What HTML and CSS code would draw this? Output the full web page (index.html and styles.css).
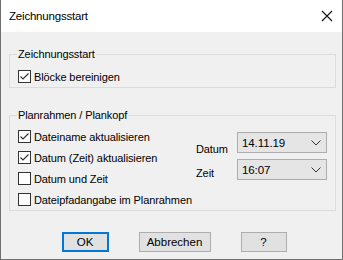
FILE: index.html
```html
<!DOCTYPE html>
<html>
<head>
    <title>Zeichnungsstart</title>
    <link rel="stylesheet" href="styles.css">
</head>
<body>
    <div class="window">
        <div class="titlebar">
            <span class="title">Zeichnungsstart</span>
            <svg class="close" width="12" height="12" viewBox="0 0 12 12">
                <path d="M1 1 L11 11 M11 1 L1 11" stroke="#111" stroke-width="1.1" fill="none"/>
            </svg>
        </div>

        <div class="content">
            <fieldset class="group group-start">
                <legend>Zeichnungsstart</legend>
                <label class="check">
                    <span class="box"><svg width="11" height="11" viewBox="0 0 11 11"><path d="M1.5 5.5 L4 8 L9.5 2.5" stroke="#333" stroke-width="1.2" fill="none"/></svg></span>
                    Blöcke bereinigen
                </label>
            </fieldset>

            <fieldset class="group group-frame">
                <legend>Planrahmen / Plankopf</legend>
                <div class="frame-body">
                    <div class="check-list">
                        <label class="check">
                            <span class="box"><svg width="11" height="11" viewBox="0 0 11 11"><path d="M1.5 5.5 L4 8 L9.5 2.5" stroke="#333" stroke-width="1.2" fill="none"/></svg></span>
                            Dateiname aktualisieren
                        </label>
                        <label class="check">
                            <span class="box"><svg width="11" height="11" viewBox="0 0 11 11"><path d="M1.5 5.5 L4 8 L9.5 2.5" stroke="#333" stroke-width="1.2" fill="none"/></svg></span>
                            Datum (Zeit) aktualisieren
                        </label>
                        <label class="check">
                            <span class="box"></span>
                            Datum und Zeit
                        </label>
                        <label class="check">
                            <span class="box"></span>
                            Dateipfadangabe im Planrahmen
                        </label>
                    </div>

                    <div class="fields">
                        <span class="field-label label-date">Datum</span>
                        <div class="combo">
                            <span>14.11.19</span>
                            <svg width="10" height="6" viewBox="0 0 10 6"><path d="M0.5 0.5 L5 5 L9.5 0.5" stroke="#333" stroke-width="1" fill="none"/></svg>
                        </div>
                        <span class="field-label label-time">Zeit</span>
                        <div class="combo">
                            <span>16:07</span>
                            <svg width="10" height="6" viewBox="0 0 10 6"><path d="M0.5 0.5 L5 5 L9.5 0.5" stroke="#333" stroke-width="1" fill="none"/></svg>
                        </div>
                    </div>
                </div>
            </fieldset>

            <div class="buttons">
                <button class="btn btn-default">OK</button>
                <button class="btn btn-wide">Abbrechen</button>
                <button class="btn">?</button>
            </div>
        </div>
    </div>
</body>
</html>
```

FILE: styles.css
```css
/* Windows-style dialog */
body {
    margin: 0;
    font-family: 'Liberation Sans', Arial, sans-serif;
    font-size: 11px;
    letter-spacing: -0.1px;
    color: #000;
    background-color: #f0f0f0;
}

.window {
    width: 343px;
    height: 260px;
    box-sizing: border-box;
    border: 1px solid #707070;
    border-top: none;
    background-color: #f0f0f0;
    display: flex;
    flex-direction: column;
}

.titlebar {
    height: 31px;
    background-color: #fff;
    display: flex;
    align-items: center;
    justify-content: space-between;
    padding: 0 9px 1px 8px;
    flex-shrink: 0;
}

.title {
    font-size: 11.5px;
    letter-spacing: -0.2px;
}

.content {
    padding: 15px 6px 0 8px;
}

.group {
    margin: 0;
    padding: 0 8px 4px 8px;
    border: 1px solid #dcdcdc;
}

.group legend {
    padding: 0 1px;
    margin-left: -1px;
    line-height: 14px;
}

.group-start {
    padding-top: 9px;
}

.group-frame {
    margin-top: 20px;
    padding-top: 8px;
    padding-bottom: 4px;
}

.check {
    display: flex;
    align-items: center;
    gap: 3px;
    height: 13px;
    line-height: 14px;
    white-space: nowrap;
}

.box {
    width: 13px;
    height: 13px;
    box-sizing: border-box;
    border: 1px solid #333;
    background-color: #fff;
    display: flex;
    align-items: center;
    justify-content: center;
    flex-shrink: 0;
}

.frame-body {
    display: flex;
    justify-content: space-between;
}

.check-list {
    display: flex;
    flex-direction: column;
    gap: 8px;
}

.fields {
    display: grid;
    grid-template-columns: 41px 90px;
    grid-template-rows: 21px 21px;
    row-gap: 6px;
    margin-top: 2px;
}

.field-label {
    line-height: 14px;
}

.label-date {
    padding-top: 10px;
}

.label-time {
    padding-top: 7px;
}

.combo {
    box-sizing: border-box;
    height: 21px;
    border: 1px solid #adadad;
    background-color: #e5e5e5;
    display: flex;
    align-items: center;
    justify-content: space-between;
    padding: 0 5px 0 4px;
    font-size: 11.5px;
}

.buttons {
    display: flex;
    justify-content: center;
    gap: 30px;
    margin-top: 21px;
    padding-left: 3px;
}

.btn {
    box-sizing: border-box;
    width: 46px;
    height: 20px;
    border: 1px solid #adadad;
    background-color: #e1e1e1;
    font-family: 'Liberation Sans', Arial, sans-serif;
    font-size: 11.5px;
    color: #000;
    padding: 0;
}

.btn-default {
    width: 47px;
    border: 2px solid #0078d7;
}

.btn-wide {
    width: 72px;
}
```
